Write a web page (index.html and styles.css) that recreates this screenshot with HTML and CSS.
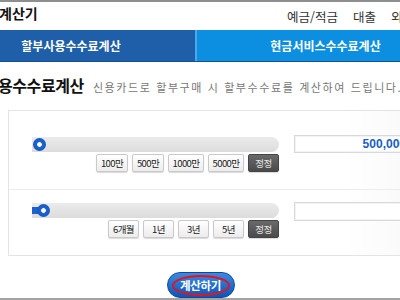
FILE: index.html
```html
<!DOCTYPE html>
<html lang="ko">
<head>
<meta charset="UTF-8" />
<title>할부사용수수료계산</title>
<link rel="stylesheet" href="styles.css">
</head>
<body>
<div class="page">

  <!-- Header -->
  <div class="header">
    <div class="logo">계산기</div>
    <div class="gnb">
      <span>예금/적금</span>
      <span>대출</span>
      <span>외환</span>
    </div>
  </div>

  <!-- Tabs -->
  <div class="tabs">
    <div class="tab tab-on">할부사용수수료계산</div>
    <div class="tab">현금서비스수수료계산</div>
  </div>

  <div class="title-row">
    <h1 class="title">할부사용수수료계산</h1>
    <p class="desc">신용카드로 할부구매 시 할부수수료를 계산하여 드립니다.</p>
  </div>

  <!-- Calculator box -->
  <div class="calc-box">
    <div class="calc-row first">
      <div class="slider-col">
        <div class="track">
          <div class="knob"></div>
        </div>
        <div class="quick-btns">
          <button class="qbtn">100만</button>
          <button class="qbtn">500만</button>
          <button class="qbtn wide">1000만</button>
          <button class="qbtn wide">5000만</button>
          <button class="qbtn dark">정정</button>
        </div>
      </div>
      <div class="value-box amount">500,000</div>
    </div>

    <div class="calc-row second">
      <div class="slider-col">
        <div class="track">
          <div class="fill"></div>
          <div class="knob knob-2"></div>
        </div>
        <div class="quick-btns">
          <button class="qbtn">6개월</button>
          <button class="qbtn">1년</button>
          <button class="qbtn">3년</button>
          <button class="qbtn">5년</button>
          <button class="qbtn dark">정정</button>
        </div>
      </div>
      <div class="value-box period"></div>
    </div>
  </div>

  <div class="submit-wrap">
    <button class="submit-btn"><span>계산하기</span></button>
  </div>

</div>
</body>
</html>
```

FILE: styles.css
```css
/* base */
* {
  box-sizing: border-box;
}
body {
  margin: 0;
  width: 400px;
  height: 300px;
  overflow: hidden;
  background: #fff;
  color: #222;
  font-family: "Noto Sans CJK KR", "Liberation Sans", sans-serif;
}
.page {
  margin-left: -53px;
  width: 507px;
  height: 300px;
  border-top: 2px solid #8e8e8e;
  border-bottom: 2px solid #a3a3a3;
  overflow: hidden;
}

/* header */
.header {
  display: flex;
  height: 28px;
}
.logo {
  flex: 0 0 340px;
  padding-left: 52px;
  padding-top: 1px;
  font-size: 14px;
  font-weight: 700;
  line-height: 20px;
  color: #111;
}
.gnb {
  display: flex;
  gap: 15px;
  padding-top: 7px;
  font-size: 12.5px;
  line-height: 16px;
  color: #333;
  white-space: nowrap;
}

/* tabs */
.tabs {
  display: flex;
  height: 32px;
  border-bottom: 1px solid #17508f;
}
.tab {
  flex: 1;
  display: flex;
  align-items: center;
  justify-content: center;
  background: #0c8fe0;
  color: #fff;
  font-size: 12px;
  font-weight: 700;
}
.tab-on {
  flex: 0 0 250px;
  background: #1f5ea8;
  border-right: 2px solid #4ba8ee;
}

/* title */
.title-row {
  display: flex;
  align-items: baseline;
  margin-top: 13px;
  padding-left: 8px;
  height: 20px;
  white-space: nowrap;
}
.title {
  margin: 0;
  font-size: 16px;
  line-height: 20px;
  letter-spacing: -0.4px;
  font-weight: 700;
  color: #111;
}
.desc {
  margin: 0 0 0 9px;
  font-size: 11px;
  letter-spacing: 1.6px;
  color: #777;
}

/* calculator box */
.calc-box {
  margin: 15px 0 0 61px;
  border: 1px solid #e4e4e4;
  border-right: none;
  background: linear-gradient(90deg, #fff 0%, #fff 75%, #f6f6f6 100%);
}
.calc-row {
  display: flex;
  align-items: flex-start;
  padding: 26px 0 17px 23px;
}
.calc-row.second {
  border-top: 1px solid #ececec;
  padding-top: 13px;
}
.slider-col {
  flex: 0 0 247px;
}
.track {
  position: relative;
  height: 15px;
  background: linear-gradient(#ebebeb, #dcdcdc);
  border-radius: 0 8px 8px 0;
}
.fill {
  position: relative;
  top: 4px;
  width: 10px;
  height: 7px;
  background: #1a62cc;
}
.knob {
  position: absolute;
  top: 1px;
  left: 1px;
  width: 13px;
  height: 13px;
  border-radius: 50%;
  background: radial-gradient(circle, #fff 0 2px, #1e66d2 2.6px, #0e4fb4 100%);
}
.knob-2 {
  left: 5px;
}

.quick-btns {
  display: flex;
  justify-content: flex-end;
  gap: 4px;
  margin-top: 2px;
}
.qbtn {
  width: 32px;
  height: 18px;
  padding: 0;
  border: 1px solid #c9c9c9;
  border-radius: 2px;
  background: linear-gradient(#fff, #ececec);
  box-shadow: 0 1px 1px rgba(0,0,0,0.15);
  font-family: "Noto Sans CJK KR", sans-serif;
  font-size: 9.5px;
  letter-spacing: -0.6px;
  line-height: 16px;
  color: #222;
}
.qbtn.wide {
  width: 36px;
}
.second .qbtn {
  width: 31px;
}
.qbtn.dark {
  width: 31px;
  background: linear-gradient(#6a6a6a, #4a4a4a);
  border-color: #444;
  color: #e8e8e8;
}

.value-box {
  flex: 0 0 118px;
  margin-left: 15px;
  height: 18px;
  border: 1px solid #d9d9d9;
  box-shadow: inset 0 0 0 1px #f3f3f3;
  background: #fff;
  padding-right: 5px;
  text-align: right;
  font-family: "Liberation Sans", sans-serif;
  font-size: 12px;
  font-weight: 700;
  line-height: 16px;
  color: #1760c4;
}
.value-box.amount {
  margin-top: -2px;
}
.value-box.period {
  margin-top: -1px;
  height: 19px;
}

/* submit */
.submit-wrap {
  margin-top: 16px;
  text-align: center;
  line-height: 0;
}
.submit-btn {
  width: 68px;
  height: 26px;
  padding: 2px 4px;
  border: 1px solid #0b4a9e;
  border-radius: 13px;
  background: linear-gradient(#3c8ae2, #0e55b9);
  cursor: pointer;
}
.submit-btn span {
  display: block;
  height: 21px;
  border: 2px solid #e3141c;
  border-radius: 50%;
  font-family: "Noto Sans CJK KR", sans-serif;
  font-size: 11.5px;
  font-weight: 700;
  line-height: 17px;
  color: #fff;
  letter-spacing: -0.3px;
}
```
